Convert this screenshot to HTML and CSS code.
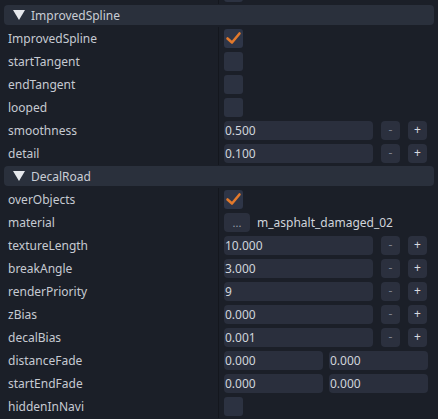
FILE: index.html
```html
<!DOCTYPE html>
<html>
<head>
    <title>Inspector</title>
    <link rel="stylesheet" href="styles.css">
</head>
<body>
    <div class="inspector">
        <!-- tail of the component above, scrolled out of view -->
        <div class="row">
            <div class="label"></div>
            <div class="value"><span class="check"></span></div>
        </div>

        <div class="section"><span class="arrow"></span>ImprovedSpline</div>
        <div class="row">
            <div class="label">ImprovedSpline</div>
            <div class="value"><span class="check on"><svg viewBox="0 0 19 19"><polyline points="3.5,9.5 8,13.5 15.5,4.5"/></svg></span></div>
        </div>
        <div class="row">
            <div class="label">startTangent</div>
            <div class="value"><span class="check"></span></div>
        </div>
        <div class="row">
            <div class="label">endTangent</div>
            <div class="value"><span class="check"></span></div>
        </div>
        <div class="row">
            <div class="label">looped</div>
            <div class="value"><span class="check"></span></div>
        </div>
        <div class="row">
            <div class="label">smoothness</div>
            <div class="value">
                <span class="field">0.500</span>
                <span class="btn dim">-</span>
                <span class="btn">+</span>
            </div>
        </div>
        <div class="row">
            <div class="label">detail</div>
            <div class="value">
                <span class="field">0.100</span>
                <span class="btn dim">-</span>
                <span class="btn">+</span>
            </div>
        </div>

        <div class="section"><span class="arrow"></span>DecalRoad</div>
        <div class="row">
            <div class="label">overObjects</div>
            <div class="value"><span class="check on"><svg viewBox="0 0 19 19"><polyline points="3.5,9.5 8,13.5 15.5,4.5"/></svg></span></div>
        </div>
        <div class="row">
            <div class="label">material</div>
            <div class="value">
                <span class="pick">...</span>
                <span class="asset">m_asphalt_damaged_02</span>
            </div>
        </div>
        <div class="row">
            <div class="label">textureLength</div>
            <div class="value">
                <span class="field">10.000</span>
                <span class="btn dim">-</span>
                <span class="btn">+</span>
            </div>
        </div>
        <div class="row">
            <div class="label">breakAngle</div>
            <div class="value">
                <span class="field">3.000</span>
                <span class="btn dim">-</span>
                <span class="btn">+</span>
            </div>
        </div>
        <div class="row">
            <div class="label">renderPriority</div>
            <div class="value">
                <span class="field">9</span>
                <span class="btn dim">-</span>
                <span class="btn">+</span>
            </div>
        </div>
        <div class="row">
            <div class="label">zBias</div>
            <div class="value">
                <span class="field">0.000</span>
                <span class="btn dim">-</span>
                <span class="btn">+</span>
            </div>
        </div>
        <div class="row">
            <div class="label">decalBias</div>
            <div class="value">
                <span class="field">0.001</span>
                <span class="btn dim">-</span>
                <span class="btn">+</span>
            </div>
        </div>
        <div class="row">
            <div class="label">distanceFade</div>
            <div class="value pair">
                <span class="field half">0.000</span>
                <span class="field half">0.000</span>
            </div>
        </div>
        <div class="row">
            <div class="label">startEndFade</div>
            <div class="value pair">
                <span class="field half">0.000</span>
                <span class="field half">0.000</span>
            </div>
        </div>
        <div class="row">
            <div class="label">hiddenInNavi</div>
            <div class="value"><span class="check"></span></div>
        </div>
    </div>
</body>
</html>
```

FILE: styles.css
```css
body {
    margin: 0;
    background-color: #1b1f28;
    font-family: "Noto Sans", "Open Sans", sans-serif;
    font-size: 12px;
    color: #c6cad2;
    overflow: hidden;
}
.inspector {
    margin-top: -19px;
}
.row {
    display: grid;
    grid-template-columns: 218px 1fr;
    height: 23px;
}
.label {
    display: flex;
    align-items: center;
    padding-left: 8px;
    white-space: nowrap;
}
.value {
    display: flex;
    align-items: center;
    gap: 8px;
    padding-left: 5px;
    border-left: 1px solid #14171e;
}
.value.pair {
    gap: 6px;
}
.section {
    display: flex;
    align-items: center;
    height: 20px;
    margin: 1px 4px 2px 4px;
    background-color: #2a303c;
    border-radius: 4px;
    color: #c9cdd5;
}
.arrow {
    width: 0;
    height: 0;
    margin: 0 6px 0 9px;
    border-left: 6px solid transparent;
    border-right: 6px solid transparent;
    border-top: 10px solid #e6e8ec;
}
.check {
    width: 19px;
    height: 19px;
    border-radius: 3px;
    background-color: #2c3241;
}
.check.on {
    background-color: #2e3547;
}
.check svg {
    display: block;
    width: 19px;
    height: 19px;
}
.check polyline {
    fill: none;
    stroke: #e2792c;
    stroke-width: 2.6;
    stroke-linecap: round;
    stroke-linejoin: round;
}
.field {
    box-sizing: border-box;
    width: 149px;
    height: 19px;
    line-height: 19px;
    padding-left: 1px;
    border-radius: 4px;
    background-color: #2a2f3d;
    color: #d0d4db;
}
.field.half {
    width: 99px;
}
.btn {
    width: 19px;
    height: 19px;
    line-height: 18px;
    text-align: center;
    border-radius: 4px;
    background-color: #2b303e;
    color: #d8dbe1;
}
.btn.dim {
    color: #7d828e;
}
.pick {
    width: 26px;
    height: 19px;
    line-height: 19px;
    text-align: center;
    border-radius: 4px;
    background-color: #2b303e;
    color: #9a9fa9;
    font-size: 11px;
}
.asset {
    margin-left: -1px;
    color: #d0d4db;
}
```
